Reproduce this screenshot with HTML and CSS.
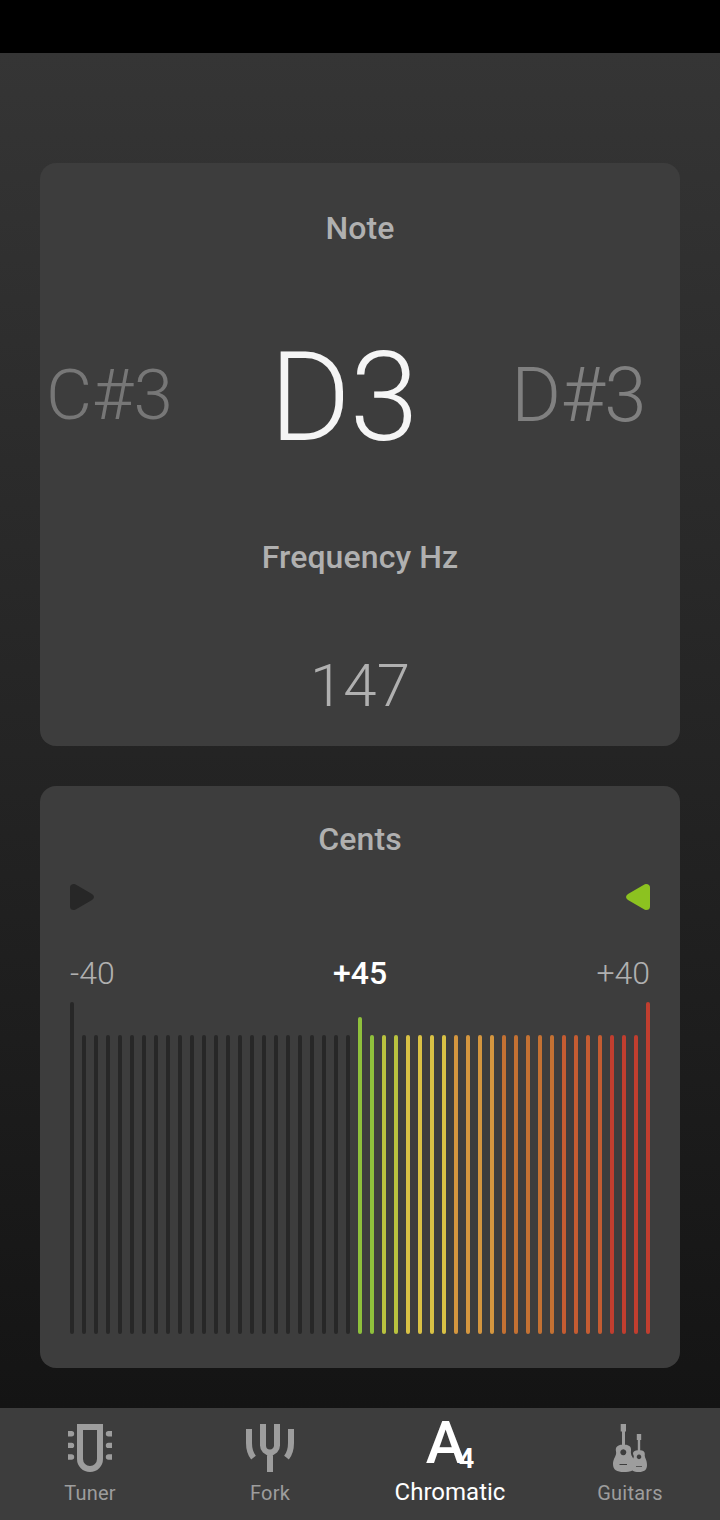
FILE: index.html
```html
<!DOCTYPE html>
<html lang="en">
<head>
    <meta charset="UTF-8">
    <meta name="viewport" content="width=device-width, initial-scale=1.0">
    <title>Chromatic Tuner</title>
    <link rel="stylesheet" href="styles.css">
</head>
<body>
    <div class="status-bar"></div>

    <main>
        <!-- Note and frequency -->
        <section class="card note-card">
            <h2>Note</h2>
            <div class="notes">
                <span class="note prev">C#3</span>
                <span class="note current">D3</span>
                <span class="note next">D#3</span>
            </div>
            <h2>Frequency Hz</h2>
            <div class="frequency">147</div>
        </section>

        <!-- Cents meter -->
        <section class="card cents-card">
            <h2>Cents</h2>
            <div class="arrows">
                <svg class="arrow-low" width="24" height="26" viewBox="0 0 24 26"><path d="M0 3.5Q0 0 4 0Q5 0 6.500 1L22 10Q24 11.500 24 13Q24 14.500 22 16L6.500 25Q5 26 4 26Q0 26 0 22.500Z"/></svg>
                <svg class="arrow-high" width="24" height="26" viewBox="0 0 24 26"><path d="M24 3.500Q24 0 20 0Q19 0 17.500 1L2 10Q0 11.500 0 13Q0 14.500 2 16L17.500 25Q19 26 20 26Q24 26 24 22.500Z"/></svg>
            </div>
            <div class="scale">
                <span>-40</span>
                <span class="value">+45</span>
                <span>+40</span>
            </div>
            <div class="meter" id="meter"></div>
        </section>
    </main>

    <nav>
        <a class="tab">
            <svg width="48" height="48" viewBox="0 0 48 48">
                <path d="M14 3H34V35A10 10 0 0 1 14 35Z" fill="none" stroke="currentColor" stroke-width="6"/>
                <path d="M2 7h3.500a2.700 2.700 0 0 1 0 5.400H2zM2 18.700h3.500a2.700 2.700 0 0 1 0 5.400H2zM2 30.300h3.500a2.700 2.700 0 0 1 0 5.400H2zM46 7h-3.500a2.700 2.700 0 0 0 0 5.400H46zM46 18.700h-3.500a2.700 2.700 0 0 0 0 5.400H46zM46 30.300h-3.500a2.700 2.700 0 0 0 0 5.400H46z"/>
            </svg>
            <span>Tuner</span>
        </a>
        <a class="tab">
            <svg width="48" height="48" viewBox="0 0 48 48" fill="none" stroke="currentColor" stroke-width="6">
                <path d="M17 0V21.500A7 7 0 0 0 31 21.500V0M24 28V48M3 5V19Q3 28 7.500 33.700M45 5V19Q45 28 40.500 33.700"/>
            </svg>
            <span>Fork</span>
        </a>
        <a class="tab active">
            <div class="a4">A<sub>4</sub></div>
            <span>Chromatic</span>
        </a>
        <a class="tab">
            <svg width="48" height="48" viewBox="0 0 48 48">
                <path fill-rule="evenodd" d="M14.700 0h5.300v7.500h-1v13.300C23 20.800 25.500 23 25 26.500C24.500 31 26 32 27.200 34.500C28.500 32 27.500 32 27 29.800C26.800 27.500 29 26.300 31.800 26.200V16h-1v-6h4.400v6h-1v10.200C37 26.300 39 27.500 38.800 30C38.200 34 41 35 41 41C41 46 38 48 33 48C30 48 28 47.500 26.500 46.500C24 48 21 48 17.500 48C11 48 7 46 7 40C7 34 11 32 10 27.500C9 23 12 20.800 16 20.800V7.500h-1.300zM17.300 25.200a3 3 0 1 0 .01 0zM33 30.600a2.300 2.300 0 1 0 .01 0zM13.500 40v1h7.500v-1zM30 42v.8h6v-.8z"/>
            </svg>
            <span>Guitars</span>
        </a>
    </nav>

    <script>
        // Each entry: [number of bars, colour]
        const groups = [
            [24, "#272727"],
            [2, "#8fc03c"],
            [2, "#b9c23f"],
            [4, "#d9c145"],
            [4, "#d4963f"],
            [5, "#c37133"],
            [4, "#c45c32"],
            [4, "#c03e2f"]
        ];
        const meter = document.getElementById("meter");

        groups.forEach(([count, color]) => {
            for (let i = 0; i < count; i++) {
                const bar = document.createElement("div");
                bar.className = "bar";
                bar.style.backgroundColor = color;
                meter.appendChild(bar);
            }
        });
    </script>
</body>
</html>
```
FILE: styles.css
```css
* {
    box-sizing: border-box;
}
body {
    margin: 0;
    height: 1520px;
    display: flex;
    flex-direction: column;
    font-family: Roboto, sans-serif;
    background-color: #151515;
    color: #b0b0b0;
}
.status-bar {
    height: 53px;
    background-color: #000;
}
main {
    flex: 1;
    padding: 110px 40px 40px;
    display: flex;
    flex-direction: column;
    gap: 40px;
    background: linear-gradient(#353535, #141414);
}
.card {
    background-color: #3d3d3d;
    border-radius: 16px;
}
h2 {
    margin: 0;
    font-size: 32px;
    font-weight: 500;
    line-height: 40px;
    letter-spacing: 0.1px;
    text-align: center;
}
.note-card {
    height: 583px;
    padding-top: 45px;
}
.notes {
    height: 140px;
    margin: 79px 0 70px;
    padding: 0 34px 0 6px;
    display: flex;
    justify-content: space-between;
    align-items: center;
    font-weight: 300;
}
.note {
    line-height: 140px;
}
.prev {
    font-size: 71px;
    color: #777;
    padding-bottom: 4px;
}
.current {
    font-size: 124px;
    letter-spacing: -1px;
    color: #f5f5f5;
    padding: 1px 0 0 3px;
}
.next {
    font-size: 76px;
    letter-spacing: -0.5px;
    color: #808080;
    padding-bottom: 4px;
}
.frequency {
    margin-top: 79px;
    font-size: 60px;
    font-weight: 300;
    line-height: 60px;
    text-align: center;
}
.cents-card {
    height: 582px;
    padding: 33px 30px;
}
.arrows {
    display: flex;
    justify-content: space-between;
    margin-top: 25px;
    height: 26px;
}
.arrow-low {
    fill: #272727;
}
.arrow-high {
    fill: #8cc220;
}
.scale {
    display: grid;
    grid-template-columns: 1fr 1fr 1fr;
    margin-top: 43px;
    font-size: 32px;
    font-weight: 300;
    line-height: 40px;
    text-align: center;
}
.scale span:first-child {
    text-align: left;
}
.scale span:last-child {
    text-align: right;
}
.scale .value {
    font-weight: 500;
    color: #fff;
}
.meter {
    display: flex;
    justify-content: space-between;
    align-items: flex-end;
    margin-top: 9px;
    height: 332px;
}
.bar {
    width: 4px;
    height: 299px;
    border-radius: 2px;
}
.bar:nth-child(25) {
    height: 317px;
}
.bar:first-child,
.bar:last-child {
    height: 332px;
}
nav {
    height: 112px;
    display: grid;
    grid-template-columns: repeat(4, 1fr);
    background-color: #3d3d3d;
}
.tab {
    padding-top: 16px;
    display: flex;
    flex-direction: column;
    align-items: center;
    font-size: 20px;
    line-height: 24px;
    letter-spacing: 0.2px;
    color: #9d9d9d;
}
.tab svg {
    fill: currentColor;
    margin-bottom: 9px;
}
.tab svg[fill="none"] {
    fill: none;
}
.tab.active {
    padding-top: 11px;
    font-size: 24px;
    letter-spacing: 0;
    color: #fff;
}
.a4 {
    height: 48px;
    margin-bottom: 13px;
    font-size: 60px;
    font-weight: 500;
    line-height: 48px;
    letter-spacing: -7px;
}
.a4 sub {
    font-size: 27px;
    font-weight: 700;
    line-height: 0;
    vertical-align: -5px;
    letter-spacing: 0;
}
```
